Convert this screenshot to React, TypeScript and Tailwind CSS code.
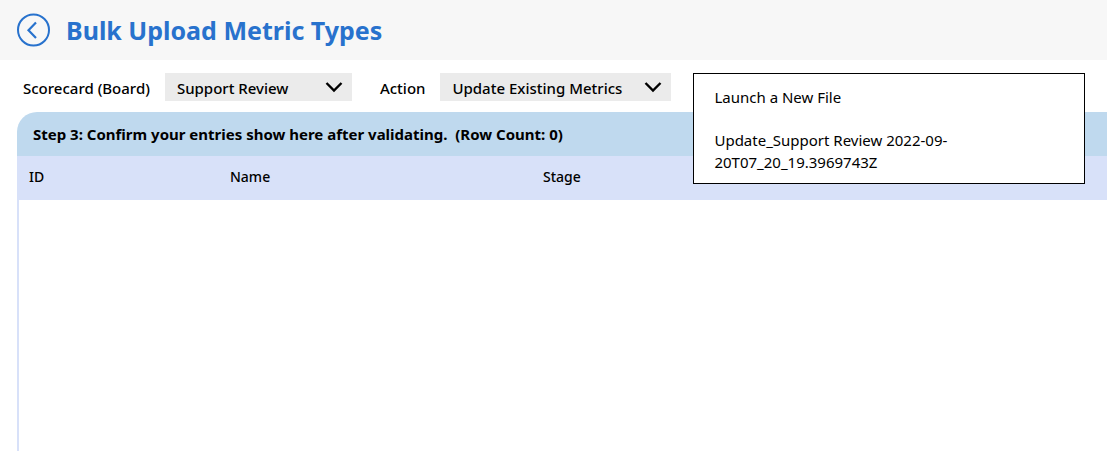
import { useState } from "react";

type PickerProps = {
  id: string;
  label: string;
  options: string[];
  widthClass: string;
};

function Picker({ id, label, options, widthClass }: PickerProps) {
  const [value, setValue] = useState(options[0]);
  return (
    <div className="flex shrink-0 items-center gap-[15px]">
      <label htmlFor={id} className="pt-0.5 text-[15px] leading-6 font-medium whitespace-nowrap">
        {label}
      </label>
      <div className={`grid items-center bg-[#ebebeb] ${widthClass}`}>
        <select
          id={id}
          value={value}
          onChange={(e) => setValue(e.target.value)}
          className="col-start-1 row-start-1 h-7 w-full appearance-none bg-transparent pt-0.5 pl-3 text-[15px] leading-6 font-medium"
        >
          {options.map((o) => (
            <option key={o}>{o}</option>
          ))}
        </select>
        <svg
          viewBox="0 0 18 12"
          className="pointer-events-none col-start-1 row-start-1 mr-2 h-3 w-5 justify-self-end"
          fill="none"
          stroke="#000"
          strokeWidth="2.4"
          aria-hidden="true"
        >
          <path d="M1.5 2 L9 9.5 L16.5 2" />
        </svg>
      </div>
    </div>
  );
}

const columns = [
  { name: "ID", width: "w-[201px]" },
  { name: "Name", width: "w-[313px]" },
  { name: "Stage", width: "w-auto" },
];
const files = ["Launch a New File", "Update_Support Review 2022-09-20T07_20_19.3969743Z"];

export default function App() {
  return (
    <div className="flex min-h-screen flex-col overflow-hidden bg-white font-['Noto_Sans',sans-serif] text-black">
      <header className="flex h-15 items-center gap-4 bg-[#f7f7f7] px-4">
        <button type="button" aria-label="Back" className="shrink-0">
          <svg viewBox="0 0 34 34" className="size-[34px]" fill="none" stroke="#2872cd" strokeWidth="2" aria-hidden="true">
            <circle cx="17.5" cy="17" r="15.5" />
            <path d="M20 9.5 L12.5 17.2 L20 25" strokeWidth="2.2" />
          </svg>
        </button>
        <h1 className="text-[25px] leading-8 font-bold whitespace-nowrap text-[#2872cd]">Bulk Upload Metric Types</h1>
      </header>

      <div className="flex h-[52px] items-start gap-7 pt-[13px] pl-[23px]">
        <Picker id="board" label="Scorecard (Board)" options={["Support Review"]} widthClass="w-[187px]" />
        <Picker
          id="action"
          label="Action"
          options={["Update Existing Metrics", "Create New Metrics"]}
          widthClass="w-[231px]"
        />
        <div className="relative mr-[22px] -ml-1.5 min-w-0 flex-1">
          <ul className="absolute inset-x-0 top-0 z-10 flex flex-col gap-[21px] border border-black bg-white pt-3 pr-[100px] pb-2.5 pl-5">
            {files.map((f) => (
              <li key={f} className="flex">
                <button type="button" className="text-left text-[15px] leading-[22px]">
                  {f}
                </button>
              </li>
            ))}
          </ul>
        </div>
      </div>

      <main className="ml-[17px] flex flex-1 flex-col">
        <h2 className="flex h-11 items-center rounded-tl-[20px] bg-[#bfd9ee] pl-4 text-[15px] leading-6 font-bold whitespace-pre">
          {"Step 3: Confirm your entries show here after validating.  (Row Count: 0)"}
        </h2>
        <div className="flex-1 border-l-2 border-[#d8e1f9]">
          <table className="w-full table-fixed border-collapse">
            <thead>
              <tr className="h-11 bg-[#d8e1f9] text-left text-sm">
                {columns.map((c) => (
                  <th key={c.name} scope="col" className={`pb-0.5 pl-2.5 font-medium ${c.width}`}>
                    {c.name}
                  </th>
                ))}
              </tr>
            </thead>
          </table>
        </div>
      </main>
    </div>
  );
}
